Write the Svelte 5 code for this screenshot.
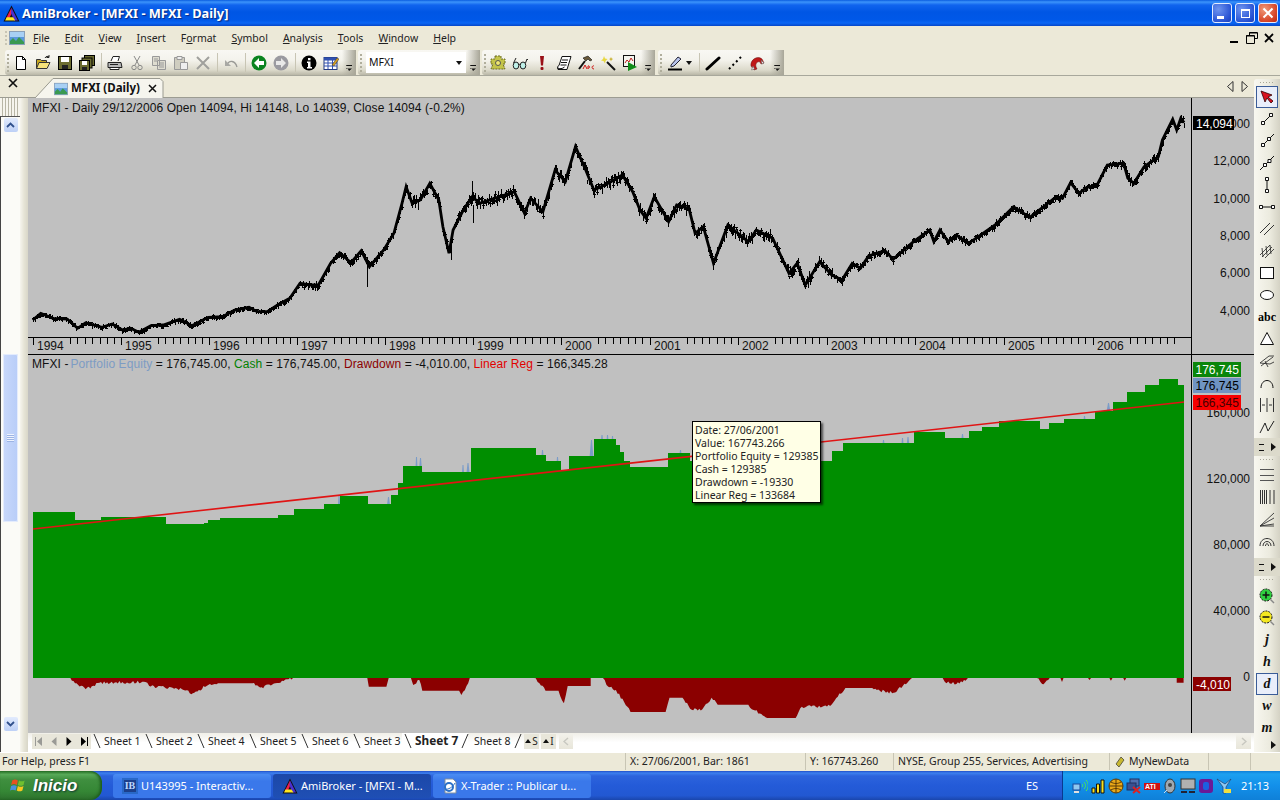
<script>
  const rng = (() => { let s = 12345; return () => (s = (s * 16807) % 2147483647) / 2147483647; })();

  // traced outlines (each list lies in its own source frame, mapped to screen px)
  const left = (p) => [p[0] / 2.45, 100 + p[1] / 3];
  const right = (p) => [640 + p[0] / 2.45, 100 + p[1] / 3];
  const trace = [
    ...[[80,660],[100,640],[130,655],[165,657],[190,685],[210,668],[250,682],[275,672],[300,690],[320,685],[340,697],[370,677],[400,675],[440,658],[470,677],[510,652],[545,650],[575,630],[610,622],[630,635],[655,635],[680,615],[710,595],[735,550],[760,555],[780,555],[810,490],[832,458],[860,488],[885,452],[905,500],[940,450],[965,400],[985,310],[995,260],[1010,310],[1030,300],[1053,250],[1075,300],[1085,380],[1100,460],[1110,390],[1135,330],[1157,290],[1175,310],[1260,275],[1285,340],[1300,295],[1330,335],[1360,210],[1385,245],[1410,140],[1435,210],[1455,270],[1490,250],[1525,225],[1550,275]].map(left),
    ...[[0,330],[15,355],[35,290],[70,365],[90,315],[120,325],[135,400],[155,380],[180,490],[215,375],[265,425],[285,390],[325,415],[365,520],[385,490],[405,555],[440,485],[470,525],[495,540],[520,490],[540,505],[560,468],[600,452],[620,478],[670,425],[710,390],[720,425],[735,390],[755,425],[775,405],[805,430],[870,375],[915,320],[955,352],[1020,290],[1035,295],[1055,248],[1075,280],[1095,262],[1120,255],[1145,195],[1185,190],[1195,235],[1210,250],[1235,200],[1270,170],[1280,120],[1305,58],[1315,90],[1325,55],[1333,68]].map(right)
  ];
  const priceAt = (x) => {
    for (let i = 1; i < trace.length; i++) {
      if (x <= trace[i][0]) {
        const [a, b] = [trace[i - 1], trace[i]];
        return a[1] + ((b[1] - a[1]) * (x - a[0])) / Math.max(b[0] - a[0], 0.01);
      }
    }
    return trace[trace.length - 1][1];
  };
  const volAt = (x) => (x < 300 ? 1 : x < 398 ? 1.8 : x < 835 ? 3.4 : x < 1120 ? 1.7 : 2.6);
  let bars = '';
  for (let x = 33; x <= 1184; x += 1) {
    const v = volAt(x);
    const y = Math.round(priceAt(x) + (rng() - 0.5) * v * 2.4);
    const h = Math.round(1 + rng() * v);
    bars += `M${x + 0.5} ${y - h}V${y + h + 1}`;
    if (rng() > 0.35) bars += `M${x - 1} ${y + Math.round(rng() * 2 - 1)}.5h3`;
  }
  const spikes = [[367,262,287],[472,181,204],[473,205,223],[451,240,260],[587,180,184],[668,215,227],[713,258,270],[842,276,286]];
  for (const [x, a, b] of spikes) bars += `M${x}.5 ${a}V${b}`;
  const line = 'M' + trace.map((p) => p[0].toFixed(1) + ' ' + p[1].toFixed(1)).join('L');

  const eqLeft = [[80,516],[184,540],[247,531],[407,552],[500,548],[510,540],[540,534],[680,525],[720,507],[795,492],[832,468],[902,492],[958,465],[975,430],[987,378],[1034,396],[1155,324],[1312,345],[1338,363],[1374,390],[1394,348],[1455,297],[1508,315],[1520,336],[1530,363],[1544,381]];
  const eqRight = [[68,339],[122,363],[470,333],[497,309],[672,276],[748,294],[806,273],[838,261],[880,243],[980,267],[1003,249],[1040,237],[1115,213],[1160,186],[1193,156],[1237,135],[1272,117],[1317,135]];
  const steps = [
    ...eqLeft.map((p) => [p[0] / 2.45, 340 + p[1] / 3]),
    ...eqRight.map((p) => [640 + p[0] / 2.45, 340 + p[1] / 3])
  ];
  let equity = 'M33 678';
  steps.forEach((s, i) => {
    const nx = i + 1 < steps.length ? steps[i + 1][0] : 1184;
    equity += `V${s[1].toFixed(0)}H${nx.toFixed(0)}`;
  });
  equity += 'V678Z';

  const peaks = [[337,341,496],[385,392,497],[415,418,457],[418,423,458],[461,465,465],[465,471,463],[540,545,450],[555,560,457],[589,594,440],[599,605,435],[605,610,435],[610,615,436],[677,684,450],[880,887,440],[900,905,438],[905,911,437],[959,966,434],[1081,1088,416],[1104,1113,403]];
  const peakPath = peaks.map(([a, b, t]) => `M${a} ${t + 24}L${(a + b) / 2 - 0.5} ${t}L${(a + b) / 2 + 0.5} ${t}L${b} ${t + 24}Z`).join('');

  const dd = [[92,54],[100,70],[112,88],[130,68],[190,66],[195,78],[215,82],[240,90],[252,100],[270,78],[285,70],[330,70],[342,82],[360,70],[375,58],[383,54],[480,54],[482,80],[505,80],[508,54],[537,54],[540,75],[548,60],[552,92],[600,92],[603,105],[612,70],[614,54],[698,54],[705,70],[713,92],[730,92],[737,130],[742,78],[772,78],[772,54],[788,54],[795,80],[805,90],[820,140],[824,156],[870,156],[875,113],[892,113],[902,146],[918,148],[925,130],[930,113],[938,134],[978,134],[985,150],[1003,174],[1040,174],[1048,140],[1085,138],[1095,110],[1105,84],[1140,84],[1150,92],[1168,98],[1180,78],[1192,54],[1232,54],[1235,66],[1250,72],[1262,62],[1265,54],[1355,54],[1362,72],[1370,60],[1372,54],[1386,54],[1388,66],[1390,54],[1422,54],[1424,60],[1426,54],[1450,54],[1452,62],[1454,54],[1468,54],[1470,62],[1472,54],[1538,54],[1538,68],[1547,68],[1547,54]];
  // sloped stretches are broken into jagged 1-2 px steps, as the daily series is
  let drawdown = 'M' + (dd[0][0] / 1.307).toFixed(1) + ' 678';
  for (let i = 1; i < dd.length; i++) {
    const [ax, ay] = [dd[i - 1][0] / 1.307, 660 + dd[i - 1][1] / 3];
    const [bx, by] = [dd[i][0] / 1.307, 660 + dd[i][1] / 3];
    const n = Math.floor((bx - ax) / 1.5);
    if (ay !== by && n > 1) {
      for (let k = 1; k < n; k++) {
        const t = k / n;
        const j = ay > 679 || by > 679 ? (rng() - 0.5) * 3 : 0;
        drawdown += `L${(ax + (bx - ax) * t).toFixed(1)} ${Math.max(678, ay + (by - ay) * t + j).toFixed(1)}`;
      }
    }
    drawdown += `L${bx.toFixed(1)} ${by.toFixed(1)}`;
  }
  drawdown += 'Z';

  const years = [[1994,33],[1995,121],[1996,209],[1997,297],[1998,385],[1999,473],[2000,561],[2001,650],[2002,738],[2003,827],[2004,915],[2005,1004],[2006,1093]];
  let ticks = '';
  for (const [, x] of years) {
    for (let m = 0; m < 12; m++) {
      if (m >= 1 && m <= 4) continue;
      const tx = Math.round(x + m * 7.4);
      if (tx < 1180) ticks += `M${tx}.5 337V${m === 0 ? 345 : 344}`;
    }
  }

  const axisTop = [[123,'14,000'],[160,'12,000'],[198,'10,000'],[235,'8,000'],[272,'6,000'],[310,'4,000']];
  const axisLow = [[412,'160,000'],[478,'120,000'],[544,'80,000'],[610,'40,000'],[676,'0']];

  const menu = [['F','ile'],['E','dit'],['V','iew'],['I','nsert'],['F','ormat','o'],['S','ymbol'],['A','nalysis'],['T','ools'],['W','indow'],['H','elp']];
  const tb1 = ['new','open','save','saveall',0,'print','cut','copy','paste','del',0,'undo',0,'back','forward',0,'info','cal'];
  const tb3 = ['gear','glasses','excl','scroll','hammer','wand','play'];
  const tools1 = ['arrow','seg','ray','ext','vert','horz','par','chan','rect','ellipse','abc','tri','fork','arc','cyc','zig'];
  const tools2 = ['hl','vl','fan','arcs'];
  const tools3 = ['zin','zout','j','h','d','w','m'];
  const letters = { j: 1, h: 1, d: 1, w: 1, m: 1 };
  const sheets = [['Sheet 1',52],['Sheet 2',52],['Sheet 4',52],['Sheet 5',52],['Sheet 6',52],['Sheet 3',51]];
  const tray = ['t1','t2','t3','t4','t5','t6','t7','t8','t9'];
</script>

<svg class="defs" aria-hidden="true">
  <defs>
    <symbol id="ami" viewBox="0 0 16 16"><path d="M8 .5 15.500 15.500H.5z" fill="#111"/><path d="M8 2.500 2.500 13.500H5.500L8.500 7z" fill="#f0204c"/><path d="M8 2.500l6 12h-3.500L7.500 7.500z" fill="#4a2fd0"/><path d="M2 14.500 3.500 11.500h6l2 3z" fill="#ffe820"/></symbol>
    <symbol id="pic" viewBox="0 0 16 16"><rect x=".5" y="1.500" width="15" height="13" fill="#5a98dc" stroke="#8aa0b8"/><rect x="1" y="2" width="14" height="5" fill="#a8d0f4"/><path d="M1 14V11l3-3 3 3 3-4 5 5v2z" fill="#3a9a50"/></symbol>
    <symbol id="new" viewBox="0 0 16 16"><path d="M3.500 1.500h6l3 3v10h-9z" fill="#fff" stroke="#000"/><path d="M9.500 1.500v3h3" fill="none" stroke="#000"/></symbol>
    <symbol id="open" viewBox="0 0 16 16"><path d="M1.500 13.500v-9h4l1 1h5v2" fill="#c8a820" stroke="#333"/><path d="M1.500 13.500 4 7.500h11l-3 6z" fill="#f6e27a" stroke="#333"/><path d="M10 3c1-2 3-2 4-1M14 0v2.500h-2.500" fill="none" stroke="#222"/></symbol>
    <symbol id="save" viewBox="0 0 16 16"><rect x="1.500" y="1.500" width="13" height="13" fill="#6c6c30" stroke="#000"/><rect x="4" y="2" width="8" height="5" fill="#fff"/><rect x="5" y="10" width="6" height="4" fill="#222"/></symbol>
    <symbol id="saveall" viewBox="0 0 16 16"><rect x="5.500" y=".5" width="10" height="10" fill="#6c6c30" stroke="#000"/><rect x="3" y="3" width="10" height="10" fill="#6c6c30" stroke="#000"/><rect x=".5" y="5.500" width="10" height="10" fill="#6c6c30" stroke="#000"/><rect x="3" y="6" width="5" height="4" fill="#fff"/><rect x="3" y="12" width="5" height="3" fill="#222"/></symbol>
    <symbol id="print" viewBox="0 0 16 16"><path d="M4 6 6 1.500h6.500L11 6" fill="#fff" stroke="#222"/><path d="M1 7.500h13l1 5H1z" fill="#b8b8b8" stroke="#222"/><path d="M3 12.500h9v2H3z" fill="#fff" stroke="#222"/><path d="M3 9.500h8" stroke="#222"/></symbol>
    <symbol id="cut" viewBox="0 0 16 16"><g fill="none" stroke="#8a8a88"><path d="M5 1l5 9M11 1 6 10"/><circle cx="5" cy="12.500" r="2.200"/><circle cx="11" cy="12.500" r="2.200"/></g></symbol>
    <symbol id="copy" viewBox="0 0 16 16"><path d="M1.500 1.500h7v9h-7zM6.500 5.500h8v9h-8z" fill="#dedcd0" stroke="#999"/><path d="M3 4h4M3 6h3M8 8h5M8 10h5M8 12h5" stroke="#999"/></symbol>
    <symbol id="paste" viewBox="0 0 16 16"><path d="M1.500 2.500h10v12h-10z" fill="#cfcdc0" stroke="#999"/><path d="M4 1.500h5v3H4z" fill="#eee" stroke="#999"/><path d="M7.500 7.500h7v7h-7z" fill="#eee" stroke="#999"/></symbol>
    <symbol id="del" viewBox="0 0 16 16"><path d="M2 2l12 12M14 2 2 14" stroke="#a0a09c" stroke-width="2"/></symbol>
    <symbol id="undo" viewBox="0 0 16 16"><path d="M4 10c2-5 8-5 10 2" fill="none" stroke="#9a9a96" stroke-width="1.300"/><path d="M2 5v6h6z" fill="#a8a8a4"/></symbol>
    <symbol id="back" viewBox="0 0 16 16"><circle cx="8" cy="8" r="7.500" fill="#0a8420"/><path d="M3 8l5-5v3h5v4H8v3z" fill="#fff"/></symbol>
    <symbol id="forward" viewBox="0 0 16 16"><circle cx="8" cy="8" r="7.500" fill="#9a9aa0"/><path d="M13 8 8 3v3H3v4h5v3z" fill="#e8e8e8"/></symbol>
    <symbol id="info" viewBox="0 0 16 16"><circle cx="8" cy="8" r="7.500" fill="#000"/><path d="M7 3h2.500v2.200H7zM6 6.500h3.500V12H11v1.500H6V12h1V8H6z" fill="#fff"/></symbol>
    <symbol id="cal" viewBox="0 0 16 16"><rect x="1" y="2.500" width="13" height="12" fill="#fff" stroke="#223a80"/><path d="M1 2.500h13v3H1z" fill="#3050b0"/><path d="M1 8h13M1 11h13M5 5v9M9.500 5v9" stroke="#3050b0"/><path d="M9 10l5-7 2 1-5 7z" fill="#d8a020" stroke="#333" stroke-width=".5"/></symbol>
    <symbol id="gear" viewBox="0 0 16 16"><path d="M5 1h6v3h4v5h-2l2 5H1l2-5H1V4h4z" fill="#c4c44a" stroke="#6a6a20" stroke-dasharray="2 1"/><circle cx="8" cy="8" r="2.500" fill="#f0e870" stroke="#555"/></symbol>
    <symbol id="glasses" viewBox="0 0 16 16"><g fill="#bff0e8" stroke="#222"><ellipse cx="4" cy="10.500" rx="2.800" ry="3.500"/><ellipse cx="11" cy="10.500" rx="2.800" ry="3.500"/></g><path d="M6.800 10c.7-.8 1.400-.8 1.400 0M1.500 8 4 3M13.500 8l1.500-4 1 1" fill="none" stroke="#222"/></symbol>
    <symbol id="excl" viewBox="0 0 16 16"><path d="M6 1h4L9 10.500H7z" fill="#9a1018"/><rect x="6.500" y="12" width="3" height="3" rx="1" fill="#9a1018"/></symbol>
    <symbol id="scroll" viewBox="0 0 16 16"><path d="M6 1.500h9l-4 13H2c-1-2 0-4 1-4z" fill="#fff" stroke="#111"/><path d="M6 5h6M5 7.500h6M4.500 10h6M1.500 13c2 1 5 1 7-1" fill="none" stroke="#111"/></symbol>
    <symbol id="hammer" viewBox="0 0 16 16"><path d="M5 3l5-2 4 4-2 1-2-2-2 2z" fill="#6a5a3a" stroke="#111" stroke-width=".6"/><path d="M7 6 1 14" stroke="#111" stroke-width="2"/><path d="M5 14l2-4 2 4M10 14v-3c2-1 2 3 0 2M16 11c-2-1-3 3 0 3" fill="none" stroke="#d01818"/></symbol>
    <symbol id="wand" viewBox="0 0 16 16"><path d="M7 7l8 8" stroke="#111" stroke-width="2"/><path d="M4 1l1 2.500L7.500 4 5.500 6 5 8.500 3.500 6 1 5.500 3 4z" fill="#e8d840"/><path d="M11 2l.7 1.500 1.500.5-1.500.7-.7 1.800-.7-1.800L9 4l1.300-.5z" fill="#c8b030"/></symbol>
    <symbol id="play" viewBox="0 0 16 16"><rect x="1.500" y=".5" width="11" height="11" fill="#f4f4ee" stroke="#111"/><path d="M3 8l2-3 2 2 2-4 2 3" fill="none" stroke="#c02020"/><path d="M6 7l9 5-9 4z" fill="#108c18"/></symbol>
    <symbol id="pen" viewBox="0 0 16 16"><path d="M4 10 11 2l3 2-7 7-3 1z" fill="#b8c4ec" stroke="#223"/><path d="M1 13.500h14v2H1z" fill="#000"/></symbol>
    <symbol id="line" viewBox="0 0 16 16"><path d="M2 14 14 3" stroke="#000" stroke-width="3" stroke-linecap="round"/></symbol>
    <symbol id="dots" viewBox="0 0 16 16"><path d="M2 14l12-12" stroke="#000" stroke-width="2" stroke-dasharray="2 3"/></symbol>
    <symbol id="magnet" viewBox="0 0 16 16"><path d="M2 11C1 5 8 0 13 4l2 4-3 1-1-2c-2-1-5 1-4 5l1 2-3 1z" fill="#c01818" stroke="#601010" stroke-width=".5"/><path d="M4 11l-1.500 4 3-1zM12 5l3 3-2 1z" fill="#f0f0f0" stroke="#555" stroke-width=".5"/></symbol>
    <symbol id="arrow" viewBox="0 0 16 16"><path d="M2 2l4 11 2-4 4 5 2-2-5-4 4-2z" fill="#d81020" stroke="#300" stroke-width=".8"/></symbol>
    <symbol id="seg" viewBox="0 0 16 16"><path d="M4.500 11.500l7-7" stroke="#111"/><path d="M2.500 10.500h3v3h-3zM10.500 2.500h3v3h-3z" fill="#fff" stroke="#111"/></symbol>
    <symbol id="ray" viewBox="0 0 16 16"><path d="M4.500 11.500 15 1" stroke="#111"/><path d="M2.500 10.500h3v3h-3zM8.500 4.500h3v3h-3z" fill="#fff" stroke="#111"/></symbol>
    <symbol id="ext" viewBox="0 0 16 16"><path d="M1 15 15 1" stroke="#111"/><path d="M4.500 8.500h3v3h-3zM9 4.500h3v3H9z" fill="#fff" stroke="#111"/></symbol>
    <symbol id="vert" viewBox="0 0 16 16"><path d="M8 3v10" stroke="#111"/><path d="M6.500 .5h3v3h-3zM6.500 12.500h3v3h-3z" fill="#fff" stroke="#111"/></symbol>
    <symbol id="horz" viewBox="0 0 16 16"><path d="M3 8h10" stroke="#111"/><path d="M.5 6.500h3v3h-3zM12.500 6.500h3v3h-3z" fill="#fff" stroke="#111"/></symbol>
    <symbol id="par" viewBox="0 0 16 16"><path d="M1 12 11 2M5 14 15 4" stroke="#333"/></symbol>
    <symbol id="chan" viewBox="0 0 16 16"><path d="M1 12 11 2M3 14 13 4M6 15 15 6M3 5l1 9M7 3l1 9M11 2l1 9" stroke="#222" stroke-width=".8"/></symbol>
    <symbol id="rect" viewBox="0 0 16 16"><rect x="1.500" y="2.500" width="13" height="11" fill="#fff" stroke="#111"/></symbol>
    <symbol id="ellipse" viewBox="0 0 16 16"><ellipse cx="8" cy="8" rx="6.500" ry="4.500" fill="#fff" stroke="#111"/></symbol>
    <symbol id="tri" viewBox="0 0 16 16"><path d="M8 1.500l6.500 12h-13z" fill="#fff" stroke="#111"/></symbol>
    <symbol id="fork" viewBox="0 0 16 16"><path d="M1 10l9-7 5 0M1 10l10 1 4-2M2 13l12-9M6 8l3 6" fill="none" stroke="#333" stroke-width=".9"/></symbol>
    <symbol id="arc" viewBox="0 0 16 16"><path d="M2 13C2 3 14 3 14 13" fill="none" stroke="#111"/></symbol>
    <symbol id="cyc" viewBox="0 0 16 16"><path d="M1.500 1v14M8 1v14M14.500 1v14M3 8h3M10 8h3" stroke="#333"/></symbol>
    <symbol id="zig" viewBox="0 0 16 16"><path d="M1 14 6 4l3 8 6-10" fill="none" stroke="#222"/></symbol>
    <symbol id="hl" viewBox="0 0 16 16"><path d="M1 2.500h14M1 8.500h14M1 13.500h14" stroke="#555"/></symbol>
    <symbol id="vl" viewBox="0 0 16 16"><path d="M1.500 1v14M3.500 1v14M5.500 1v14M7.500 1v14M11 1v14M15 1v14" stroke="#333"/></symbol>
    <symbol id="fan" viewBox="0 0 16 16"><path d="M1 15 15 2M1 15l14-8M1 15l14-2M1 15h14" stroke="#333" stroke-width=".9"/></symbol>
    <symbol id="arcs" viewBox="0 0 16 16"><path d="M1 13C1 3 15 3 15 13M4 13C4 7 12 7 12 13M6.500 13c0-3 3-3 3 0" fill="none" stroke="#333"/></symbol>
    <symbol id="zin" viewBox="0 0 16 16"><circle cx="7" cy="7" r="6" fill="#30d040" stroke="#111" stroke-dasharray="2 1"/><path d="M3.500 7h7M7 3.500v7" stroke="#111" stroke-width="1.500"/><path d="M11.500 11.500 15 15" stroke="#888" stroke-width="1.500"/></symbol>
    <symbol id="zout" viewBox="0 0 16 16"><circle cx="7" cy="7" r="6" fill="#f4e820" stroke="#111" stroke-dasharray="2 1"/><path d="M3.500 7h7" stroke="#111" stroke-width="1.500"/><path d="M11.500 11.500 15 15" stroke="#888" stroke-width="1.500"/></symbol>
    <symbol id="flag" viewBox="0 0 16 16"><path d="M2 3c2-1 3-1 5 0l-1 4C4 6 3 6 1 7z" fill="#e85020"/><path d="M8 3c2 1 3 1 5 0l-1 4c-2 1-3 1-5 0z" fill="#70c030"/><path d="M1 8c2-1 3-1 5 0l-1 4c-2-1-3-1-5 0z" fill="#4a90e0"/><path d="M7 8c2 1 3 1 5 0l-1 4c-2 1-3 1-5 0z" fill="#f8c820"/></symbol>
    <symbol id="ib" viewBox="0 0 16 16"><rect width="16" height="16" fill="#2868c8"/><rect x="2" y="2" width="12" height="12" fill="#1c3f8c"/></symbol>
    <symbol id="doc" viewBox="0 0 16 16"><path d="M3 1h8l3 3v11H3z" fill="#fff" stroke="#8090a0"/><circle cx="7" cy="9" r="4" fill="none" stroke="#2a70c8" stroke-width="2"/><path d="M3 11c3 1 8-2 10-6" fill="none" stroke="#2a70c8"/></symbol>
    <symbol id="t1" viewBox="0 0 16 16"><rect x="1" y="6" width="7" height="6" fill="#90c8f0" stroke="#1c4a9c"/><rect x="2" y="13" width="5" height="2" fill="#e0e0e0"/><path d="M10 6c1 1 1 2 0 3M12 4c2 2 2 5 0 7M14 2c3 3 3 8 0 11" fill="none" stroke="#50e850"/></symbol>
    <symbol id="t2" viewBox="0 0 16 16"><path d="M2 10h3v5H2zM6.500 6h3v9h-3zM11 2h3v13h-3z" fill="#f8e020" stroke="#111"/></symbol>
    <symbol id="t3" viewBox="0 0 16 16"><circle cx="8" cy="8" r="7" fill="#e8a818" stroke="#5a3a08"/><path d="M1 8h14M8 1v14M3 4c3 2 7 2 10 0M3 12c3-2 7-2 10 0" fill="none" stroke="#5a3a08"/></symbol>
    <symbol id="t4" viewBox="0 0 16 16"><rect x="4" y="1" width="9" height="7" fill="#5070b0" stroke="#203060"/><rect x="1" y="5" width="9" height="7" fill="#3a5090" stroke="#203060"/><path d="M7 9l7 6M14 9l-7 6" stroke="#e02020" stroke-width="2"/></symbol>
    <symbol id="t5" viewBox="0 0 16 16"><path d="M0 5h16v7H0z" fill="#d01010"/><text x="1" y="11" font-size="7" font-weight="700" font-family="Liberation Sans" fill="#fff">ATI</text></symbol>
    <symbol id="t6" viewBox="0 0 16 16"><ellipse cx="8" cy="8" rx="5" ry="7" fill="#a0a8b0" stroke="#333"/><circle cx="8" cy="7" r="2" fill="#444"/><path d="M2 15l3-3" stroke="#cde" /></symbol>
    <symbol id="t7" viewBox="0 0 16 16"><rect x="1" y="1" width="14" height="10" fill="#b0b0b0" stroke="#333"/><path d="M1 13h6v2H1zM9 13h6v2H9z" fill="#223"/></symbol>
    <symbol id="t8" viewBox="0 0 16 16"><rect x="1" y="1" width="14" height="14" rx="3" fill="#6a1a98"/><rect x="5" y="4" width="6" height="8" rx="2" fill="#1c60e0"/></symbol>
    <symbol id="t9" viewBox="0 0 16 16"><path d="M1 1l6 8v6h3V9l5-8-6 5z" fill="#90c8f0" stroke="#204070" stroke-width=".7"/><path d="M8 11h7v4H8z" fill="#f0e040"/></symbol>
  </defs>
</svg>

<div class="screen">
  <header class="title">
    <svg class="ic16 title-ic"><use href="#ami"/></svg>
    <span class="title-text">AmiBroker - [MFXI - MFXI - Daily]</span>
    <div class="wbtns">
      <button class="wb" aria-label="Minimise"><i class="gl-min"></i></button>
      <button class="wb" aria-label="Maximise"><i class="gl-max"></i></button>
      <button class="wb close" aria-label="Close"><svg width="12" height="12"><path d="M1.500 1.500l9 9M10.500 1.500l-9 9" stroke="#fff" stroke-width="2"/></svg></button>
    </div>
  </header>

  <nav class="menu">
    <span class="grip-h"></span>
    <svg class="ic16 menu-ic"><use href="#pic"/></svg>
    {#each menu as m}
      <span class="mi">{#if m[2]}F<u>o</u>rmat{:else}<u>{m[0]}</u>{m[1]}{/if}</span>
    {/each}
    <div class="mdi">
      <svg width="12" height="12"><rect x="1" y="9" width="8" height="2" fill="#000"/></svg>
      <svg width="12" height="12"><path d="M3.500 3.500V.5h8v6H9M.5 3.500h8v8h-8z" fill="none" stroke="#000"/><path d="M3 1h8M0 4h8" stroke="#000"/></svg>
      <svg width="12" height="12"><path d="M2 2l8 8M10 2l-8 8" stroke="#000" stroke-width="1.800"/></svg>
    </div>
  </nav>

  <div class="tools">
    <div class="bar b1">
      <span class="grip"></span>
      {#each tb1 as t}
        {#if t}<span class="tb"><svg class="ic16"><use href="#{t}"/></svg></span>{:else}<span class="sep"></span>{/if}
      {/each}
      <span class="chev"></span>
    </div>
    <div class="bar b2">
      <span class="grip"></span>
      <div class="combo"><span>MFXI</span><i class="dn"></i></div>
      <span class="chev"></span>
    </div>
    <div class="bar b3">
      <span class="grip"></span>
      {#each tb3 as t}<span class="tb"><svg class="ic16"><use href="#{t}"/></svg></span>{/each}
      <span class="chev"></span>
    </div>
    <div class="bar b4">
      <span class="grip"></span>
      <span class="tb wide"><svg class="ic16"><use href="#pen"/></svg><i class="dn"></i></span>
      <span class="sep"></span>
      <span class="tb"><svg class="ic16"><use href="#line"/></svg></span>
      <span class="tb"><svg class="ic16"><use href="#dots"/></svg></span>
      <span class="tb"><svg class="ic16"><use href="#magnet"/></svg></span>
      <span class="chev"></span>
    </div>
  </div>

  <div class="tabstrip">
    <svg class="strip-x" width="11" height="11"><path d="M1 1l8 8M9 1 1 9" stroke="#111" stroke-width="1.700"/></svg>
    <div class="doc-tab">
      <svg class="tab-shape" width="130" height="20"><path d="M0 20 18 .5H125l3 3V20" fill="#f6f5ee" stroke="#9a9a90"/></svg>
      <svg class="ic16 tab-ic"><use href="#pic"/></svg>
      <b>MFXI (Daily)</b>
      <svg class="tab-x" width="9" height="9"><path d="M1 1l7 7M8 1 1 8" stroke="#111" stroke-width="1.500"/></svg>
    </div>
    <div class="strip-nav">
      <svg width="7" height="11"><path d="M6 .5v10L.5 5.500z" fill="none" stroke="#333"/></svg>
      <svg width="7" height="11"><path d="M1 .5v10l5.500-5z" fill="none" stroke="#333"/></svg>
    </div>
  </div>

  <div class="body">
    <aside class="dock">
      <span class="dock-grip"></span>
      <div class="vscroll">
        <span class="sb-btn"><svg width="9" height="6"><path d="M1 5l3.500-3.500L8 5" fill="none" stroke="#30508c" stroke-width="1.800"/></svg></span>
        <span class="sb-thumb"><i></i></span>
        <span class="sb-btn down"><svg width="9" height="6"><path d="M1 1l3.500 3.500L8 1" fill="none" stroke="#30508c" stroke-width="1.800"/></svg></span>
      </div>
    </aside>

    <div class="main">
      <div class="chart">
        <svg class="plot" width="1226" height="635" viewBox="28 98 1226 635">
          <rect x="28" y="98" width="1226" height="635" fill="#c0c0c0"/>
          <path d={line} fill="none" stroke="#000" stroke-width="2.800"/>
          <path d={bars} fill="none" stroke="#000" shape-rendering="crispEdges"/>
          <path d="M28 337.500H1191" stroke="#000" shape-rendering="crispEdges"/>
          <path d={ticks} stroke="#000" shape-rendering="crispEdges"/>
          <path d="M28 354.500H1254M1191.500 98V733" stroke="#000" shape-rendering="crispEdges"/>
          <path d={peakPath} fill="#7b9cc8"/>
          <path d={equity} fill="#008e00" shape-rendering="crispEdges"/>
          <path d={drawdown} fill="#8b0000"/>
          <path d="M33 529 1184 402" stroke="#e01414" stroke-width="1.600"/>

          <g class="txt">
            <text class="hd" x="32" y="111.500">MFXI - Daily 29/12/2006 Open 14094, Hi 14148, Lo 14039, Close 14094 (-0.2%)</text>
            <text class="hd" x="32" y="368">MFXI - <tspan dx="-1.500" fill="#7d9cc4">Portfolio Equity</tspan> = 176,745.00, <tspan fill="#008000">Cash</tspan> = 176,745.00, <tspan fill="#8b0000">Drawdown</tspan> = -4,010.00, <tspan fill="#e00000">Linear Reg</tspan> = 166,345.28</text>
            {#each years as [yr, x]}<text x={x + 4} y="350">{yr}</text>{/each}
            {#each axisTop as [y, t]}<text class="ax" x="1250" y={y + 5}>{t}</text>{/each}
            {#each axisLow as [y, t]}<text class="ax" x="1250" y={y + 5}>{t}</text>{/each}
          </g>

          <g class="txt">
            <rect x="1193" y="116" width="41" height="14" fill="#000"/>
            <text class="w" x="1196" y="127.500">14,094</text>
            <rect x="1193" y="362" width="48" height="15" fill="#0a860a"/>
            <text class="w" x="1195.500" y="374">176,745</text>
            <rect x="1193" y="378" width="48" height="15" fill="#6f94c2"/>
            <text class="k" x="1195.500" y="390">176,745</text>
            <rect x="1193" y="395" width="48" height="15" fill="#f60000"/>
            <text class="dk" x="1195.500" y="407">166,345</text>
            <rect x="1193" y="677" width="38" height="14" fill="#8b0000"/>
            <text class="w" x="1196" y="688.500">-4,010</text>
          </g>
        </svg>
        <div class="tip">
          <div>Date: 27/06/2001</div>
          <div>Value: 167743.266</div>
          <div>Portfolio Equity = 129385</div>
          <div>Cash = 129385</div>
          <div>Drawdown = -19330</div>
          <div>Linear Reg = 133684</div>
        </div>
      </div>

      <div class="sheetbar">
        <div class="navs">
          <span class="nav off"><svg width="8" height="9"><path d="M.5 0v9" stroke="#9a9a96"/><path d="M7 0v9L2 4.500z" fill="#9a9a96"/></svg></span>
          <span class="nav off"><svg width="6" height="9"><path d="M5.500 0v9L.5 4.500z" fill="#9a9a96"/></svg></span>
          <span class="nav"><svg width="6" height="9"><path d="M.5 0v9l5-4.500z" fill="#000"/></svg></span>
          <span class="nav"><svg width="8" height="9"><path d="M1 0v9l5-4.500z" fill="#000"/><path d="M7.500 0v9" stroke="#000"/></svg></span>
        </div>
        {#each sheets as [name, w]}
          <span class="sheet" style="width:{w}px"><svg class="sl" width="8" height="16"><path d="M1 1l6 14" stroke="#333" fill="none"/></svg>{name}</span>
        {/each}
        <span class="sheet active"><svg class="sl" width="8" height="16"><path d="M1 1l6 14" stroke="#333" fill="none"/></svg>Sheet 7<svg class="sl end" width="8" height="16"><path d="M1 15 7 1" stroke="#333" fill="none"/></svg></span>
        <span class="sheet last">Sheet 8<svg class="sl end" width="8" height="16"><path d="M1 15 7 1" stroke="#333" fill="none"/></svg></span>
        <span class="mini"><i class="up"></i>S</span>
        <span class="mini"><i class="up"></i>I</span>
        <span class="hbtn"><svg width="6" height="9"><path d="M5 1 1 4.500 5 8" fill="none" stroke="#c8c8c0" stroke-width="1.500"/></svg></span>
        <span class="hbtn right"><svg width="6" height="9"><path d="M1 1l4 3.500L1 8" fill="none" stroke="#c8c8c0" stroke-width="1.500"/></svg></span>
      </div>
    </div>

    <aside class="rail">
      <span class="rail-grip"></span>
      {#each tools1 as t}
        <span class="rb" class:sel={t === 'arrow'}>
          {#if t === 'abc'}<em class="abc">abc</em>{:else}<svg class="ic16"><use href="#{t}"/></svg>{/if}
        </span>
      {/each}
      <span class="rail-end"><i class="r-chev"></i><i class="r-arr"></i></span>
      <span class="rail-grip mid"></span>
      {#each tools2 as t}<span class="rb"><svg class="ic16"><use href="#{t}"/></svg></span>{/each}
      <span class="rail-end second"><i class="r-chev"></i><i class="r-arr"></i></span>
      <span class="rail-grip low"></span>
      {#each tools3 as t}
        <span class="rb" class:sel={t === 'd'}>
          {#if letters[t]}<em class="let">{t}</em>{:else}<svg class="ic16"><use href="#{t}"/></svg>{/if}
        </span>
      {/each}
      <span class="rail-end lastend"><i class="r-arr"></i></span>
    </aside>
  </div>

  <footer class="status">
    <span class="c c1">For Help, press F1</span>
    <span class="c c2">X: 27/06/2001, Bar: 1861</span>
    <span class="c c3">Y: 167743.260</span>
    <span class="c c4">NYSE, Group 255, Services, Advertising</span>
    <span class="c c5"><svg class="ic10" viewBox="0 0 10 10"><path d="M6 0l3 3-5 7-3-3z" fill="#c8b830" stroke="#333" stroke-width=".7"/></svg>MyNewData</span>
    <span class="c c6"></span>
    <span class="c c7"></span>
  </footer>

  <div class="taskbar">
    <button class="start"><svg class="flag"><use href="#flag"/></svg><span>Inicio</span></button>
    <div class="tasks">
      <span class="task"><svg class="ic16"><use href="#ib"/></svg><b class="ib">IB</b>U143995 - Interactiv...</span>
      <span class="task on"><svg class="ic16"><use href="#ami"/></svg>AmiBroker - [MFXI - M...</span>
      <span class="task"><svg class="ic16"><use href="#doc"/></svg>X-Trader :: Publicar u...</span>
    </div>
    <span class="lang">ES</span>
    <div class="tray">
      {#each tray as t}<svg class="ic16"><use href="#{t}"/></svg>{/each}
      <span class="clock">21:13</span>
    </div>
  </div>
</div>

<style>
  :global(body) { margin: 0; background: #ece9d8; }
  .defs { position: absolute; width: 0; height: 0; }
  .screen {
    width: 1280px; height: 800px; overflow: hidden; display: flex; flex-direction: column;
    background: #ece9d8; color: #111;
    font: 10.500px/1 "Noto Sans", "Liberation Sans", sans-serif;
  }
  .ic16 { width: 16px; height: 16px; display: block; flex: none; }
  .ic10 { width: 10px; height: 10px; margin-right: 4px; }

  /* title bar */
  .title {
    height: 26px; flex: none; display: flex; align-items: center; padding-left: 3px; box-sizing: border-box;
    background: linear-gradient(#0a5de0 0, #3c94fb 2px, #1064ee 5px, #0056e4 12px, #0058e8 20px, #0a66f4 23px, #0546c8 26px);
  }
  .title-ic { width: 17px; height: 17px; }
  .title-text { margin-left: 2px; color: #fff; font: 700 12.800px/1 "Noto Sans", sans-serif; text-shadow: 1px 1px 1px #0a2a80; }
  .wbtns { margin-left: auto; display: flex; gap: 3px; padding-right: 2px; }
  .wb {
    width: 20px; height: 20px; padding: 0; border: 1px solid #e4ecff; border-radius: 3px; display: flex; align-items: center; justify-content: center;
    background: radial-gradient(circle at 30% 30%, #6e94ef, #2a54d4 70%, #1c3fb8);
  }
  .wb.close { width: 20px; background: radial-gradient(circle at 30% 30%, #f09a78, #d8482a 65%, #b82a14); }
  .gl-min { width: 7px; height: 3px; background: #fff; margin: 8px 4px 0 0; }
  .gl-max { width: 9px; height: 9px; border: 1px solid #fff; border-top-width: 2px; box-sizing: border-box; }

  /* menu */
  .menu { height: 24px; flex: none; display: flex; align-items: center; background: #ece9d8; position: relative; padding-left: 5px; box-sizing: border-box; }
  .grip-h { width: 3px; height: 14px; border-left: 2px dotted #c8c5b4; box-sizing: border-box; }
  .menu-ic { margin: 0 .5px 0 1px; }
  .mi { padding: 0 7.500px; color: #222; }
  .mdi { margin-left: auto; display: flex; gap: 5px; padding-right: 5px; }

  /* toolbars */
  .tools { height: 25px; flex: none; display: flex; background: #ece9d8; padding-left: 5px; gap: 3px; box-sizing: border-box; }
  .bar {
    height: 25px; display: flex; align-items: center; box-sizing: border-box; border-radius: 3px 0 0 3px;
    background: linear-gradient(#f9f8f3 0, #f4f3ec 40%, #dcdacb 80%, #b9b7a7 100%);
  }
  .b1 { width: 350px; }
  .b2 { width: 121px; }
  .b3 { width: 173px; }
  .b4 { width: 126px; }
  .grip { width: 5px; height: 18px; flex: none; box-sizing: border-box; border-left: 2px dotted #b0ae9c; margin-left: 2px; margin-right: -2px; }
  .tb { width: 22px; height: 22px; flex: none; display: flex; align-items: center; justify-content: center; }
  .tb.wide { width: 33px; gap: 3px; }
  .sep { width: 6px; height: 19px; flex: none; position: relative; }
  .sep::after { content: ""; position: absolute; left: 3px; top: 0; bottom: 0; width: 1px; background: #c8c5b4; }
  .chev {
    width: 14px; height: 25px; flex: none; margin-left: auto; position: relative;
    background: linear-gradient(90deg, transparent, #a8a698);
  }
  .chev::after { content: ""; position: absolute; left: 4px; top: 15px; width: 6px; height: 2px; border-top: 1px solid #111; border-bottom: 3px solid #111; box-sizing: content-box; clip-path: polygon(0 0,100% 0,100% 40%,0 40%,0 60%,100% 60%,50% 100%); }
  .combo {
    width: 100px; height: 21px; margin-left: 3px; display: flex; align-items: center; justify-content: space-between;
    background: #fff; padding: 0 2px 0 3px; box-sizing: border-box; flex: none;
  }
  .dn { width: 0; height: 0; border: 3px solid transparent; border-top: 4px solid #111; border-bottom: 0; display: block; }
  .combo .dn { margin-right: 2px; }

  /* document tabs */
  .tabstrip {
    height: 23px; flex: none; display: flex; align-items: flex-end; position: relative;
    background: #ece9d8; border-top: 1px solid #a8a89c; border-bottom: 1px solid #9c9c92; box-sizing: border-box;
  }
  .strip-x { position: absolute; left: 8px; top: 2px; }
  .doc-tab { position: relative; width: 128px; height: 20px; margin-left: 35px; margin-bottom: -1px; display: flex; align-items: center; }
  .tab-shape { position: absolute; left: 0; top: 0; }
  .tab-ic { position: relative; margin: 1px 3px 0 19px; width: 14px; height: 14px; }
  .doc-tab b { position: relative; font-size: 11.500px; font-weight: 700; white-space: nowrap; }
  .tab-x { position: absolute; left: 113px; top: 6px; }
  .strip-nav { margin-left: auto; display: flex; gap: 7px; padding: 0 32px 5px 0; }

  /* body */
  .body { height: 654px; flex: none; display: flex; }
  .dock { width: 28px; flex: none; display: flex; flex-direction: column; background: linear-gradient(90deg, #f6f5ee 20px, #e6e4d6 24px, #d8d6c8); }
  .dock-grip { height: 18px; width: 18px; flex: none; margin-left: 2px; background: repeating-linear-gradient(90deg, #b8b6a6 0 1px, transparent 1px 3px); }
  .vscroll { flex: 1; width: 20px; box-sizing: border-box; border-top: 1px solid #555; border-left: 1px solid #444; display: flex; flex-direction: column; align-items: center; padding: 1px 0 21px; background: #fbfbf7; }
  .sb-btn { width: 14px; height: 14px; flex: none; display: flex; align-items: center; justify-content: center; border-radius: 2px; background: linear-gradient(#e2ebfd, #bdd0f6); }
  .sb-thumb { width: 15px; height: 168px; margin-top: 222px; flex: none; border-radius: 2px; background: linear-gradient(90deg, #c8d8fb, #b8cdf8); display: flex; align-items: center; justify-content: center; box-shadow: inset 0 0 0 1px #e4ecfd; }
  .sb-thumb i { width: 7px; height: 8px; background: repeating-linear-gradient(#eef3fe 0 1px, #9cb4e4 1px 2px); }
  .sb-btn.down { margin-top: auto; }

  .main { width: 1226px; flex: none; display: flex; flex-direction: column; }
  .chart { height: 635px; flex: none; position: relative; }
  .plot { display: block; }
  .txt text { font: 12px "Liberation Sans", Arial, sans-serif; fill: #111; }
  .txt text.hd { letter-spacing: .08px; }
  .txt text.w { fill: #fff; }
  .txt text.k { fill: #000; }
  .txt text.dk { fill: #400; }
  .txt text.ax { text-anchor: end; }
  .tip {
    position: absolute; left: 664px; top: 323px; width: 129px; height: 82px; box-sizing: border-box; padding: 2px 2px;
    background: #ffffe6; border: 1px solid #000; box-shadow: 2px 2px 2px rgba(0,0,0,.6);
    font-size: 10.500px; line-height: 13px; white-space: nowrap; color: #222;
  }

  /* sheet bar */
  .sheetbar { height: 19px; flex: none; display: flex; align-items: center; padding-bottom: 3px; box-sizing: border-box; background: linear-gradient(#f0efe8, #fff 50%, #fff); color: #222; position: relative; }
  .navs { width: 63px; flex: none; display: flex; padding-left: 4px; box-sizing: border-box; }
  .nav { width: 15px; height: 15px; display: flex; align-items: center; justify-content: center; background: #e8e6da; }
  .sheet { display: flex; align-items: center; height: 16px; flex: none; white-space: nowrap; box-sizing: border-box; }
  .sl { flex: none; margin: 0 3px 0 2px; }
  .sl.end { margin: 0 0 0 3px; }
  .sheet.active { font-weight: 700; font-size: 11.800px; width: 66px; background: #fff; }
  .sheet.last { width: 48px; margin-left: 6px; }
  .mini { display: flex; align-items: center; height: 15px; width: 15px; justify-content: center; font-size: 10px; background: #e8e6da; margin-left: 2px; flex: none; }
  .up { width: 0; height: 0; border: 3px solid transparent; border-bottom: 4px solid #111; border-top: 0; margin-right: 1px; }
  .hbtn { width: 14px; height: 15px; display: flex; align-items: center; justify-content: center; background: linear-gradient(#f2f1ea, #e8e6da); margin-left: 3px; flex: none; }
  .hbtn.right { margin-left: auto; margin-right: 3px; width: 15px; }

  /* right rail */
  .rail { width: 26px; flex: none; height: 673px; margin-top: -19px; position: relative; display: flex; flex-direction: column; align-items: center; background: linear-gradient(90deg, #f8f7f0, #ecebdf 60%, #d4d2c4); border-radius: 3px 0 0 0; }
  .rail-grip { height: 7px; width: 16px; flex: none; display: block; background: radial-gradient(circle, #a8a698 0.8px, transparent 1px) 0 2px / 3px 3px repeat-x; }
  .rail-grip.mid { height: 8px; }
  .rail-grip.low { height: 9px; }
  .rb { width: 22px; height: 22px; flex: none; display: flex; align-items: center; justify-content: center; box-sizing: border-box; position: relative; }
  .rb.sel { background: #e9eefa; outline: 1px solid #3a5c98; outline-offset: -1px; }
  .abc { font: 700 12px "Liberation Serif", serif; color: #000; }
  .let { font: italic 700 14px "Liberation Serif", serif; color: #111; }
  .rail-end { height: 18px; width: 26px; flex: none; display: flex; align-items: center; justify-content: flex-end; gap: 7px; padding-right: 4px; box-sizing: border-box; background: #dcdacb; }
  .rail-end.second { margin-top: 6px; }
  .lastend { background: none; height: 12px; }
  .r-chev { width: 5px; height: 7px; border-top: 1px solid #111; border-bottom: 1px solid #111; box-sizing: border-box; }
  .r-arr { width: 0; height: 0; border: 4px solid transparent; border-left: 5px solid #111; border-right: 0; }

  /* status bar */
  .status { height: 19px; flex: none; display: flex; background: #ece9d8; border-top: 1px solid #fff; padding-bottom: 1px; box-sizing: border-box; align-items: stretch; color: #222; }
  .c { display: flex; align-items: center; box-sizing: border-box; padding-left: 4px; border-left: 1px solid #c8c5b4; white-space: nowrap; flex: none; }
  .c1 { width: 625px; border: 0; padding-left: 2px; }
  .c2 { width: 180px; }
  .c3 { width: 88px; }
  .c4 { width: 216px; }
  .c5 { width: 99px; padding-left: 5px; }
  .c6 { width: 42px; }
  .c7 { width: 30px; }

  /* taskbar */
  .taskbar {
    flex: 1; display: flex; align-items: center; position: relative; color: #fff; font-size: 11px;
    background: linear-gradient(#1f4ec8 0, #3d80ee 2px, #2c63dc 5px, #245bd8 50%, #2258d2 85%, #1a46ad 100%);
  }
  .start {
    width: 102px; height: 29px; flex: none; border: 0; padding: 0 0 0 10px; display: flex; align-items: center; gap: 5px;
    border-radius: 0 12px 12px 0; color: #fff;
    background: linear-gradient(#2e7c2e 0, #57a957 12%, #3f8f3f 30%, #358735 70%, #2c6f2c 100%);
    box-shadow: inset -2px 0 3px #1c5a1c;
  }
  .flag { width: 18px; height: 18px; }
  .start span { font: italic 700 17px "Liberation Sans", sans-serif; text-shadow: 1px 1px 2px #133; }
  .tasks { display: flex; margin-left: 11px; gap: 2px; }
  .task { width: 158px; height: 24px; box-sizing: border-box; display: flex; align-items: center; gap: 3px; padding-left: 9px; border-radius: 3px; background: linear-gradient(#4a8cf2, #3a78ea 30%, #3a78ea); white-space: nowrap; position: relative; }
  .ib { position: absolute; left: 9px; font: 700 10px/16px "Liberation Serif", serif; color: #bcd8ff; width: 16px; text-align: center; }
  .task.on { background: linear-gradient(#1c48a8, #1f4fb4); }
  .lang { position: absolute; left: 1026px; top: 9px; }
  .tray {
    position: absolute; left: 1062px; top: 0; right: 0; height: 100%; display: flex; align-items: center; padding-left: 9px; gap: 2px; box-sizing: border-box;
    background: linear-gradient(#0e7fd8 0, #1ca0f0 3px, #1390ea 50%, #0f80d8 100%); border-left: 1px solid #0a3a90;
  }
  .clock { margin-left: 7px; }
</style>
